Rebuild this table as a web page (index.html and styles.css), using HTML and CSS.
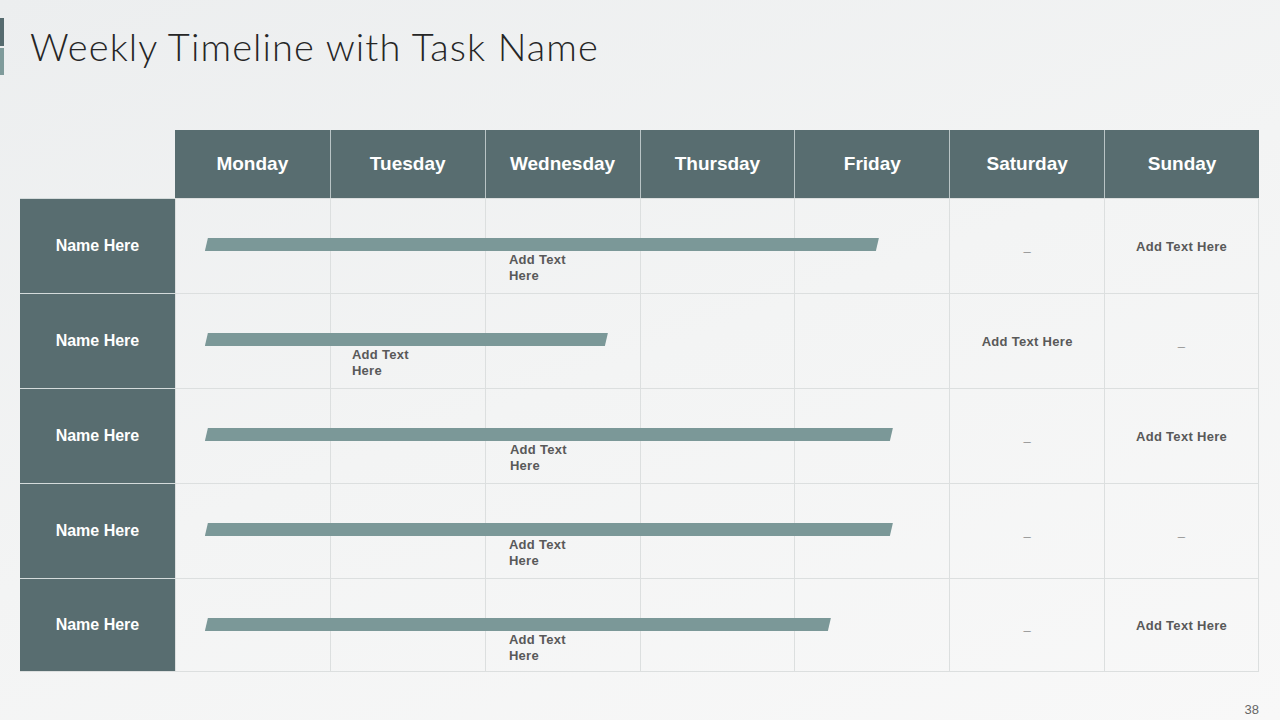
FILE: index.html
```html
<!DOCTYPE html>
<html>
<head>
<meta charset="utf-8">
<link rel="stylesheet" href="styles.css">
</head>
<body>
<div class="slide">
  <div class="head">
    <div class="accent"><span class="a1"></span><span class="a2"></span></div>
    <h1 class="title">Weekly Timeline with Task Name</h1>
  </div>

  <div class="table">
    <div class="hrow">
      <div class="hcell blank"></div>
      <div class="hcell">Monday</div>
      <div class="hcell">Tuesday</div>
      <div class="hcell">Wednesday</div>
      <div class="hcell">Thursday</div>
      <div class="hcell">Friday</div>
      <div class="hcell">Saturday</div>
      <div class="hcell">Sunday</div>
    </div>

    <div class="row">
      <div class="name">Name Here</div>
      <div class="cell"></div><div class="cell"></div><div class="cell"></div><div class="cell"></div><div class="cell"></div>
      <div class="cell txt">_</div>
      <div class="cell txt">Add Text Here</div>
      <div class="track">
        <div class="bar" style="width:674px"></div>
        <div class="label" style="margin-left:304px">Add Text Here</div>
      </div>
    </div>

    <div class="row">
      <div class="name">Name Here</div>
      <div class="cell"></div><div class="cell"></div><div class="cell"></div><div class="cell"></div><div class="cell"></div>
      <div class="cell txt">Add Text Here</div>
      <div class="cell txt">_</div>
      <div class="track">
        <div class="bar" style="width:403px"></div>
        <div class="label" style="margin-left:147px">Add Text Here</div>
      </div>
    </div>

    <div class="row">
      <div class="name">Name Here</div>
      <div class="cell"></div><div class="cell"></div><div class="cell"></div><div class="cell"></div><div class="cell"></div>
      <div class="cell txt">_</div>
      <div class="cell txt">Add Text Here</div>
      <div class="track">
        <div class="bar" style="width:688px"></div>
        <div class="label" style="margin-left:305px">Add Text Here</div>
      </div>
    </div>

    <div class="row">
      <div class="name">Name Here</div>
      <div class="cell"></div><div class="cell"></div><div class="cell"></div><div class="cell"></div><div class="cell"></div>
      <div class="cell txt">_</div>
      <div class="cell txt">_</div>
      <div class="track">
        <div class="bar" style="width:688px"></div>
        <div class="label" style="margin-left:304px">Add Text Here</div>
      </div>
    </div>

    <div class="row">
      <div class="name">Name Here</div>
      <div class="cell"></div><div class="cell"></div><div class="cell"></div><div class="cell"></div><div class="cell"></div>
      <div class="cell txt">_</div>
      <div class="cell txt">Add Text Here</div>
      <div class="track">
        <div class="bar" style="width:626px"></div>
        <div class="label" style="margin-left:304px">Add Text Here</div>
      </div>
    </div>
  </div>

  <div class="footer">38</div>
</div>
</body>
</html>
```

FILE: styles.css
```css
html, body {
  margin: 0;
  padding: 0;
}
body {
  width: 1280px;
  height: 720px;
  overflow: hidden;
  font-family: "Liberation Sans", Arial, sans-serif;
  background: linear-gradient(160deg, #eceeef 0%, #f3f4f4 50%, #f8f8f8 100%);
}
.slide {
  width: 1280px;
  height: 720px;
  display: flex;
  flex-direction: column;
}
.head {
  display: flex;
  align-items: flex-start;
  padding-top: 18px;
  height: 130px;
  box-sizing: border-box;
  flex-shrink: 0;
}
.accent {
  width: 4px;
  display: flex;
  flex-direction: column;
  gap: 2px;
}
.accent .a1 {
  display: block;
  height: 28px;
  background: #566b6f;
}
.accent .a2 {
  display: block;
  height: 27px;
  background: #7f9b9b;
}
.title {
  margin: 0 0 0 26px;
  font-family: Lato, "Liberation Sans", sans-serif;
  font-weight: 300;
  font-size: 38px;
  line-height: 56px;
  color: #262626;
  letter-spacing: 1.1px;
}
.table {
  margin-left: 20px;
  width: 1239px;
}
.hrow, .row {
  display: grid;
  grid-template-columns: repeat(8, 1fr);
}
.hrow {
  height: 68px;
}
.hcell {
  background: #586d70;
  color: #ffffff;
  font-weight: 700;
  font-size: 19px;
  display: flex;
  align-items: center;
  justify-content: center;
  border-left: 1px solid #b9c4c5;
}
.hcell:nth-child(2) {
  border-left: none;
}
.hcell.blank {
  background: transparent;
  border-left: none;
}
.row {
  height: 95px;
}
.row:last-child {
  height: 94px;
}
.row > * {
  grid-row: 1;
}
.row > :nth-child(1) { grid-column: 1; }
.row > :nth-child(2) { grid-column: 2; }
.row > :nth-child(3) { grid-column: 3; }
.row > :nth-child(4) { grid-column: 4; }
.row > :nth-child(5) { grid-column: 5; }
.row > :nth-child(6) { grid-column: 6; }
.row > :nth-child(7) { grid-column: 7; }
.row > :nth-child(8) { grid-column: 8; }
.row > .track { grid-column: 2 / 7; }

.name {
  background: #586d70;
  color: #ffffff;
  font-weight: 700;
  font-size: 16px;
  display: flex;
  align-items: center;
  justify-content: center;
  border-top: 1px solid #d4dbdb;
}
.row:first-of-type .name {
  border-top: none;
}
.cell {
  border-top: 1px solid #dcdfdf;
  border-left: 1px solid #dcdfdf;
}
.row > .cell:nth-child(8) {
  border-right: 1px solid #dcdfdf;
}
.row:last-child > * {
  border-bottom: 1px solid #dcdfdf;
}
.txt {
  display: flex;
  align-items: center;
  justify-content: center;
  font-weight: 700;
  font-size: 13px;
  letter-spacing: 0.3px;
  color: #595959;
}
.track {
  z-index: 1;
  padding-top: 40px;
  padding-left: 30px;
  display: flex;
  flex-direction: column;
  align-items: flex-start;
}
.bar {
  height: 13px;
  background: #7b9898;
  clip-path: polygon(3px 0, 100% 0, calc(100% - 3px) 100%, 0 100%);
}
.label {
  margin-top: 1px;
  width: 70px;
  font-weight: 700;
  font-size: 13px;
  line-height: 16px;
  color: #595959;
  letter-spacing: 0.3px;
}
.footer {
  width: 1259px;
  text-align: right;
  margin-top: 30px;
  font-size: 13px;
  line-height: 16px;
  color: #666666;
}
```
